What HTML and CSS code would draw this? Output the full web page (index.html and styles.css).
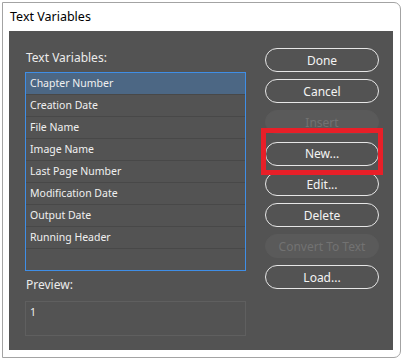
FILE: index.html
```html
<!DOCTYPE html>
<html lang="en">
<head>
    <meta charset="UTF-8">
    <meta name="viewport" content="width=device-width, initial-scale=1.0">
    <title>Text Variables</title>
    <link rel="stylesheet" href="styles.css">
</head>
<body>
    <div class="window">
        <div class="titlebar">Text Variables</div>

        <div class="panel">
            <!-- Left column: variable list and preview -->
            <div class="left">
                <div class="label">Text Variables:</div>
                <ul class="list">
                    <li class="selected">Chapter Number</li>
                    <li>Creation Date</li>
                    <li>File Name</li>
                    <li>Image Name</li>
                    <li>Last Page Number</li>
                    <li>Modification Date</li>
                    <li>Output Date</li>
                    <li>Running Header</li>
                </ul>
                <div class="label preview-label">Preview:</div>
                <div class="preview">1</div>
            </div>

            <!-- Right column: buttons -->
            <div class="buttons">
                <button>Done</button>
                <button>Cancel</button>
                <button class="disabled">Insert</button>
                <div class="marked">
                    <button>New...</button>
                    <span class="highlight"></span>
                </div>
                <button>Edit...</button>
                <button>Delete</button>
                <button class="disabled">Convert To Text</button>
                <button>Load...</button>
            </div>
        </div>
    </div>
</body>
</html>
```

FILE: styles.css
```css
body {
    margin: 0;
    background-color: #fff;
    font-family: "Noto Sans", "Open Sans", sans-serif;
}
.window {
    box-sizing: border-box;
    width: 399px;
    height: 356px;
    margin: 2px 0 0 2px;
    border: 1px solid #a3a3a3;
    border-radius: 0 7px 7px 0;
    background-color: #fff;
    display: flex;
    flex-direction: column;
}
.titlebar {
    height: 28px;
    padding-left: 7px;
    font-size: 12.5px;
    line-height: 28px;
    color: #000;
}
.panel {
    box-sizing: border-box;
    width: 384px;
    height: 319px;
    margin-left: 6px;
    padding: 17px 0 0 16px;
    background-color: #535353;
    display: flex;
    gap: 19px;
}
.left {
    width: 221px;
    padding-top: 2px;
}
.label {
    height: 16px;
    padding-left: 1px;
    font-size: 12px;
    line-height: 16px;
    color: #ececec;
    margin-bottom: 6px;
}
.list {
    box-sizing: border-box;
    height: 199px;
    margin: 0;
    padding: 0;
    list-style: none;
    border: 1px solid #3f8ee6;
}
.list li {
    box-sizing: border-box;
    height: 22px;
    padding-left: 4px;
    border-bottom: 1px solid #484848;
    font-size: 10.5px;
    line-height: 21px;
    color: #f0f0f0;
}
.list li.selected {
    background-color: #4c6784;
}
.preview-label {
    margin-top: 6px;
    margin-bottom: 8px;
}
.preview {
    box-sizing: border-box;
    height: 35px;
    padding: 3px 4px;
    border: 1px solid #5f5f5f;
    font-size: 10.5px;
    line-height: 14px;
    color: #f0f0f0;
}
.buttons {
    width: 114px;
    display: flex;
    flex-direction: column;
    gap: 7px;
}
button {
    box-sizing: border-box;
    width: 114px;
    height: 24px;
    padding: 0;
    border: 1px solid #e6e6e6;
    border-radius: 12px;
    background-color: transparent;
    font-family: inherit;
    font-size: 12px;
    color: #f4f4f4;
}
button.disabled {
    border-color: #5a5a5a;
    background-color: #5a5a5a;
    color: #727272;
}
.marked {
    position: relative;
    height: 24px;
}
.highlight {
    position: absolute;
    box-sizing: border-box;
    left: -4px;
    top: -13px;
    width: 122px;
    height: 47px;
    border: 5px solid #e81f28;
}
```
